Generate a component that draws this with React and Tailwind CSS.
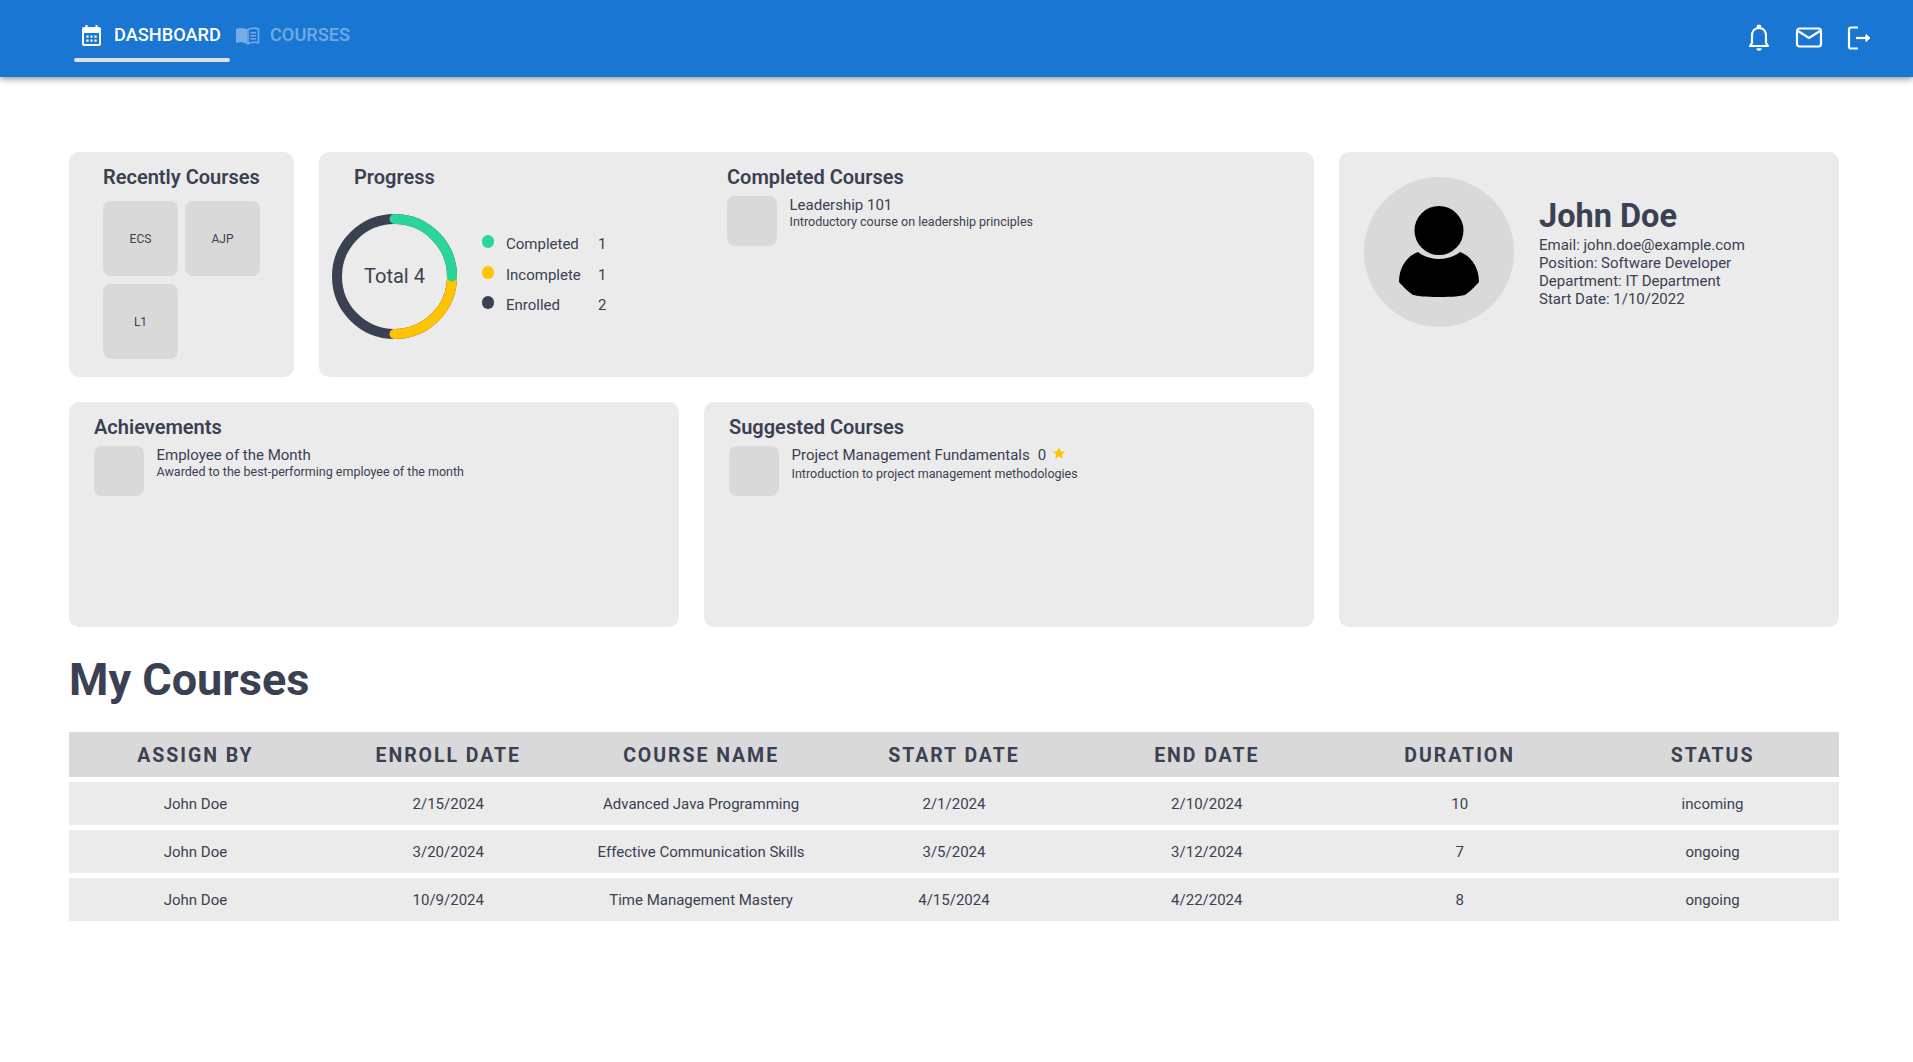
import React from 'react'

const rows = [
    ["John Doe", "2/15/2024", "Advanced Java Programming", "2/1/2024", "2/10/2024", "10", "incoming"],
    ["John Doe", "3/20/2024", "Effective Communication Skills", "3/5/2024", "3/12/2024", "7", "ongoing"],
    ["John Doe", "10/9/2024", "Time Management Mastery", "4/15/2024", "4/22/2024", "8", "ongoing"],
]

const heads = ["ASSIGN BY", "ENROLL DATE", "COURSE NAME", "START DATE", "END DATE", "DURATION", "STATUS"]

function CalendarIcon() {
    return (
        <svg viewBox="0 0 24 24" className="w-[24px] h-[24px] mt-[1px] flex-shrink-0">
            <rect x="2" y="3" width="19" height="19" rx="2" fill="#fff" />
            <rect x="5.5" y="1" width="2" height="4" fill="#fff" />
            <rect x="15.5" y="1" width="2" height="4" fill="#fff" />
            <rect x="4" y="9" width="15" height="11" fill="#1976d2" />
            {[6.4, 10.4, 14.4].map((x) =>
                [11.5, 15.5].map((y) => <rect key={`${x}-${y}`} x={x} y={y} width="2.2" height="2.2" fill="#fff" />)
            )}
        </svg>
    )
}

function BookIcon() {
    return (
        <svg viewBox="0 0 26 26" className="w-[26px] h-[26px] opacity-40 flex-shrink-0">
            <path d="M1 6C4 4.5 8 4.5 12 6.5V21C8 19 4 19 1 20Z" fill="#fff" />
            <path d="M13 6.5C16 4.8 20 4.8 23.5 6V19.8C20 19 16 19 13 20.8Z" fill="none" stroke="#fff" strokeWidth="1.6" />
            <path d="M15.5 9.8h5.5M15.5 12.8h5.5M15.5 15.8h5.5" fill="none" stroke="#fff" strokeWidth="1.4" />
        </svg>
    )
}

function Thumb() {
    return <div className="w-[50px] h-[50px] rounded-[8px] bg-[#d9d9d9] flex-shrink-0" />
}

function Donut() {
    return (
        <div className="relative w-[125px] h-[125px] flex-shrink-0">
            <svg viewBox="0 0 125 125" className="w-full h-full">
                <circle cx="62.5" cy="62.5" r="57.5" fill="none" stroke="#3a4152" strokeWidth="10" />
                <path d="M62.5 120 A57.5 57.5 0 0 0 120 62.5" fill="none" stroke="#ffc400" strokeWidth="10" strokeLinecap="round" />
                <path d="M62.5 5 A57.5 57.5 0 0 1 120 62.5" fill="none" stroke="#2ad598" strokeWidth="10" strokeLinecap="round" />
            </svg>
            <div className="absolute inset-0 flex items-center justify-center text-[20px] pb-[2px] text-[#3a4152]">Total 4</div>
        </div>
    )
}

function Legend({ color, label, value }) {
    return (
        <div className="flex items-center h-[30.5px] text-[15px] text-[#3a4152]">
            <span className={`w-[12px] h-[13px] rounded-full ${color} -mt-[6px]`} />
            <span className="ml-[12px] w-[92px]">{label}</span>
            <span>{value}</span>
        </div>
    )
}

export default function App() {
    return (
        <div className="min-h-[1062px] bg-white font-['Roboto',sans-serif] text-[#3a4152]">

            {/* Top bar */}
            <header className="h-[77px] bg-[#1976d2] shadow-[0_2px_4px_-1px_rgba(0,0,0,0.2),0_4px_5px_0_rgba(0,0,0,0.14),0_1px_10px_0_rgba(0,0,0,0.12)] flex items-center justify-between pl-[74px] pr-[39px] pb-[2px]">
                <nav className="flex self-start">
                    <div className="relative w-[156px] h-[62px] flex items-start pt-[23px] pl-[6px] gap-[10px] text-white text-[18.2px] leading-[24px] font-medium">
                        <CalendarIcon />
                        <span>DASHBOARD</span>
                        <span className="absolute left-0 right-0 bottom-0 h-[4px] rounded-full bg-[#e0e0e0]" />
                    </div>
                    <div className="flex items-start pt-[23px] pl-[5px] gap-[9px] text-white/40 text-[18.2px] leading-[24px] font-medium">
                        <BookIcon />
                        <span>COURSES</span>
                    </div>
                </nav>
                <div className="flex items-center gap-[20px]">
                    <svg viewBox="0 0 30 30" className="w-[30px] h-[30px] fill-none stroke-white stroke-[2.2]">
                        <circle cx="15" cy="3.8" r="1.3" className="fill-white" />
                        <path d="M15 5C10 5 8 9 8 13v7l-2 3h18l-2-3v-7c0-4-2-8-7-8z" strokeLinejoin="round" />
                        <path d="M12.5 25.3h5a2.5 2.5 0 0 1-5 0z" className="fill-white stroke-0" />
                    </svg>
                    <svg viewBox="0 0 30 30" className="w-[30px] h-[30px] fill-none stroke-white stroke-[2.2]">
                        <rect x="3" y="5.5" width="24" height="18" rx="2.5" />
                        <path d="M4 8l11 7 11-7" />
                    </svg>
                    <svg viewBox="0 0 30 30" className="w-[30px] h-[30px] fill-none stroke-white stroke-[2.2]">
                        <path d="M14 4.5H7a2 2 0 0 0-2 2v17a2 2 0 0 0 2 2h7" />
                        <path d="M12 15h11" />
                        <path d="M22 11.5l4 3.5-4 3.5z" className="fill-white stroke-1" />
                    </svg>
                </div>
            </header>

            <main className="pl-[69px] pr-[74px] pt-[75px]">

                {/* Cards */}
                <div className="grid grid-cols-[225px_585px_385px_500px] grid-rows-[225px_225px] gap-[25px]">

                    <section className="rounded-[10px] bg-[#ebebeb] pt-[13px] pl-[34px]">
                        <h2 className="text-[20px] leading-[24px] font-semibold">Recently Courses</h2>
                        <div className="grid grid-cols-[75px_75px] gap-x-[7px] gap-y-[8px] mt-[12px]">
                            {["ECS", "AJP", "L1"].map((c) => (
                                <div key={c} className="h-[75px] rounded-[8px] bg-[#d9d9d9] flex items-center justify-center text-[12px]">{c}</div>
                            ))}
                        </div>
                    </section>

                    <section className="col-span-2 rounded-[10px] bg-[#ebebeb] flex">
                        <div className="w-[385px] flex-shrink-0 pt-[13px]">
                            <h2 className="text-[20px] leading-[24px] font-semibold pl-[35px]">Progress</h2>
                            <div className="flex items-center pl-[13px] mt-[25px]">
                                <Donut />
                                <div className="ml-[25px] mt-[-3px]">
                                    <Legend color="bg-[#2ad598]" label="Completed" value="1" />
                                    <Legend color="bg-[#ffc400]" label="Incomplete" value="1" />
                                    <Legend color="bg-[#3a4152]" label="Enrolled" value="2" />
                                </div>
                            </div>
                        </div>
                        <div className="pt-[13px] pl-[23px]">
                            <h2 className="text-[20px] leading-[24px] font-semibold">Completed Courses</h2>
                            <div className="flex gap-[12.5px] mt-[7px]">
                                <Thumb />
                                <div className="pt-[1px]">
                                    <div className="text-[15px] leading-[17px]">Leadership 101</div>
                                    <div className="text-[12.5px] leading-[16px]">Introductory course on leadership principles</div>
                                </div>
                            </div>
                        </div>
                    </section>

                    <section className="row-span-2 rounded-[10px] bg-[#ebebeb] pt-[25px] pl-[25px]">
                        <div className="flex items-start gap-[25px]">
                            <div className="w-[150px] h-[150px] rounded-full bg-[#d9d9d9] flex items-center justify-center flex-shrink-0">
                                <svg viewBox="0 0 80 92" className="w-[80px] h-[92px] fill-black">
                                    <circle cx="40" cy="24.5" r="24.5" />
                                    <path d="M19 46c6 5 14 7 21 7s15-2 21-7c11 4 19 15 19 30-1 1-8 9-14 13-4 1-12 2-26 2s-22-1-26-2C8 85 1 77 0 76 0 61 8 50 19 46z" />
                                </svg>
                            </div>
                            <div className="pt-[20px]">
                                <div className="text-[32.5px] leading-[39px] font-bold">John Doe</div>
                                <div className="text-[15px] leading-[18px]">Email: john.doe@example.com</div>
                                <div className="text-[15px] leading-[18px]">Position: Software Developer</div>
                                <div className="text-[15px] leading-[18px]">Department: IT Department</div>
                                <div className="text-[15px] leading-[18px]">Start Date: 1/10/2022</div>
                            </div>
                        </div>
                    </section>

                    <div className="col-span-3 grid grid-cols-2 gap-[25px]">
                        <section className="rounded-[10px] bg-[#ebebeb] pt-[13px] pl-[25px]">
                            <h2 className="text-[20px] leading-[24px] font-semibold">Achievements</h2>
                            <div className="flex gap-[12.5px] mt-[7px]">
                                <Thumb />
                                <div className="pt-[1px]">
                                    <div className="text-[15px] leading-[17px]">Employee of the Month</div>
                                    <div className="text-[12.5px] leading-[16px]">Awarded to the best-performing employee of the month</div>
                                </div>
                            </div>
                        </section>
                        <section className="rounded-[10px] bg-[#ebebeb] pt-[13px] pl-[25px]">
                            <h2 className="text-[20px] leading-[24px] font-semibold">Suggested Courses</h2>
                            <div className="flex gap-[12.5px] mt-[7px]">
                                <Thumb />
                                <div className="pt-[1px]">
                                    <div className="flex items-center text-[15px] leading-[17px]">
                                        Project Management Fundamentals
                                        <span className="ml-[8px]">0</span>
                                        <svg viewBox="0 0 24 24" className="w-[14px] h-[14px] ml-[6px] -mt-[6px] fill-[#ffc400]">
                                            <path d="M12 2l3 7 7.5.6-5.7 4.9 1.8 7.5L12 18l-6.6 4 1.8-7.5L1.5 9.6 9 9z" />
                                        </svg>
                                    </div>
                                    <div className="text-[12.5px] leading-[16px] mt-[2px]">Introduction to project management methodologies</div>
                                </div>
                            </div>
                        </section>
                    </div>
                </div>

                {/* My Courses */}
                <h1 className="text-[45px] leading-[52px] font-bold mt-[27px]">My Courses</h1>

                <table className="w-full table-fixed border-separate border-spacing-y-[5px] mt-[21px] text-center">
                    <thead>
                        <tr className="bg-[#d9d9d9] h-[45px]">
                            {heads.map((h) => (
                                <th key={h} className="text-[19.5px] font-bold tracking-[0.1em] p-0 pt-[3px]">{h}</th>
                            ))}
                        </tr>
                    </thead>
                    <tbody>
                        {rows.map((r, i) => (
                            <tr key={i} className="bg-[#ebebeb] h-[43px]">
                                {r.map((c, j) => (
                                    <td key={j} className="text-[15px] p-0 pt-[2px]">{c}</td>
                                ))}
                            </tr>
                        ))}
                    </tbody>
                </table>
            </main>
        </div>
    )
}
